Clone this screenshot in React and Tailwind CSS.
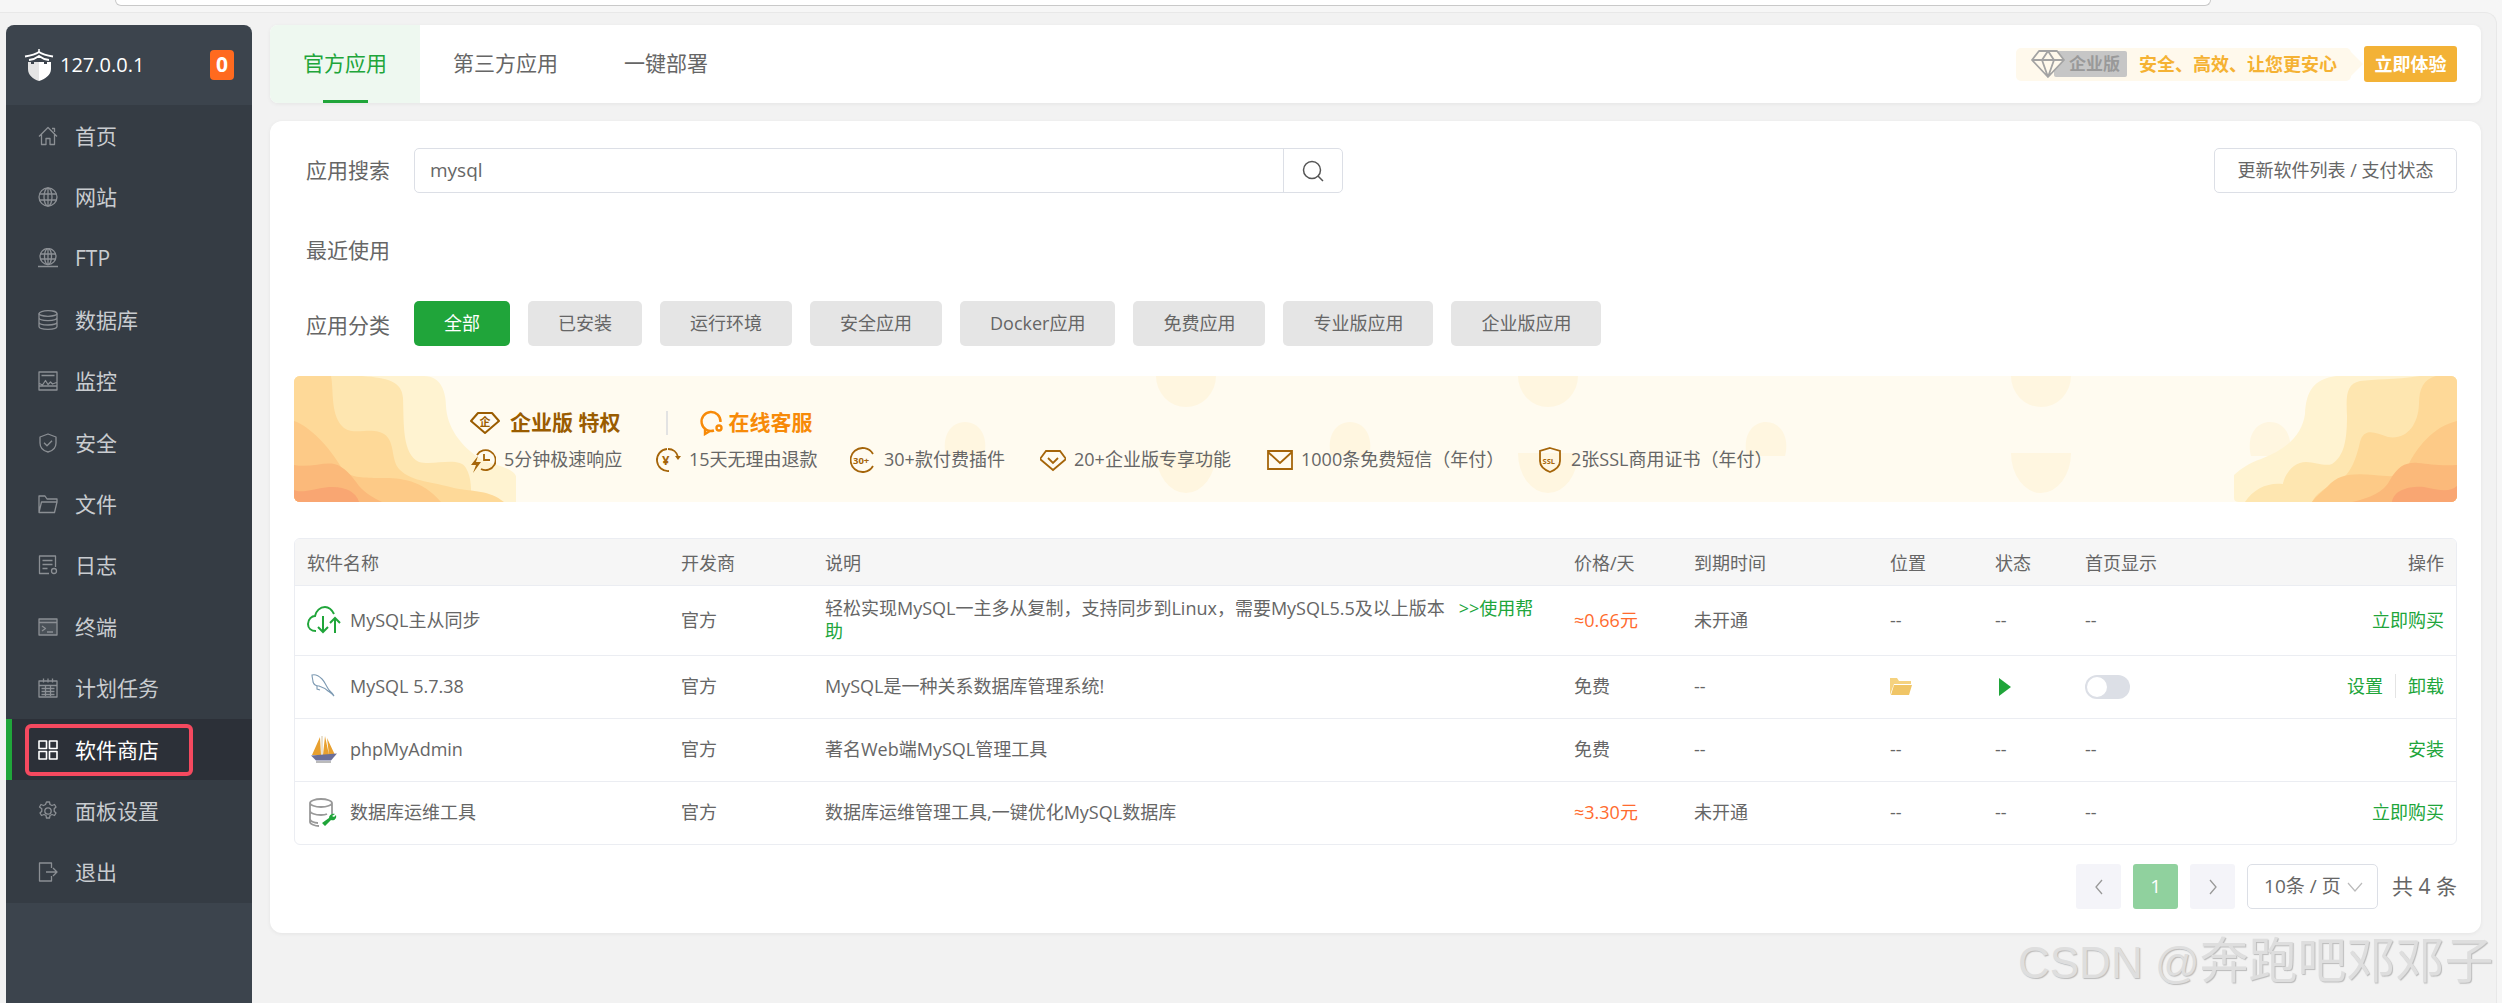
const FONT = "font-['Open_Sans','Noto_Sans_CJK_SC',sans-serif]";

const Ico = ({ children, className = 'w-5 h-5' }) => (
  <svg viewBox="0 0 20 20" fill="none" stroke="currentColor" strokeWidth="1.3" strokeLinejoin="round" className={className}>
    {children}
  </svg>
);

const navItems = [
  { label: '首页', icon: <Ico><path d="M1 10.5 10 1.500l9 9M3.500 8.500V18.500h4.500v-6h4v6h4.500V8.500M14 2.500h2.500V6" /></Ico> },
  { label: '网站', icon: <Ico><circle cx="10" cy="10" r="9" /><ellipse cx="10" cy="10" rx="4" ry="9" /><path d="M10 1v18M1.500 7h17M1.500 13h17" /></Ico> },
  { label: 'FTP', icon: <Ico><circle cx="10" cy="8.500" r="8" /><ellipse cx="10" cy="8.500" rx="3.500" ry="8" /><path d="M10 .5v16M2 6h16M2 11h16M0 18.500h20" /></Ico> },
  { label: '数据库', icon: <Ico><ellipse cx="10" cy="3.500" rx="9" ry="2.800" /><path d="M1 3.500v13c0 1.600 4 2.800 9 2.800s9-1.200 9-2.800v-13M1 7.800c0 1.600 4 2.800 9 2.800s9-1.200 9-2.800M1 12.200c0 1.600 4 2.800 9 2.800s9-1.200 9-2.800" /></Ico> },
  { label: '监控', icon: <Ico><path d="M1 1h18v18H1zM1 15h18M3.500 4.500h13M1.500 12.500l3 1.500 3-4.500 2.500 4 2.500-2.500 2 2 4-1.500" /></Ico> },
  { label: '安全', icon: <Ico><path d="M10 1l8 3v6c0 5-4 8-8 9-4-1-8-4-8-9V4z" /><path d="M6 9.800l3 3 5-5" /></Ico> },
  { label: '文件', icon: <Ico><path d="M1 18.500V2h6l2 3h10v3M1 18.500h15.500L19 8H3.500z" /></Ico> },
  { label: '日志', icon: <Ico><path d="M11 18.500H1.500V1h16v11M4.500 5.500h10M4.500 9.500h10M4.500 13.500h5" /><circle cx="16" cy="16" r="2.500" /></Ico> },
  { label: '终端', icon: <Ico><path d="M1 2h18v16H1z" fill="currentColor" fillOpacity=".25" /><path d="M1 5.500h18M4 9l3.500 2.500L4 14M9 15h6" /></Ico> },
  { label: '计划任务', icon: <Ico><path d="M1 3h18v16H1zM1 7.500h18M5.500 .5v4M10 .5v4M14.500 .5v4M3.500 10.500h13M3.500 13.500h13M3.500 16.500h13M7.500 8v10M12.500 8v10" /></Ico> },
  { label: '软件商店', active: true, icon: <Ico><path d="M1 1h7.500v7.500H1zM11.500 1H19v7.500h-7.500zM1 11.500h7.500V19H1zM11.500 11.500H19V19h-7.500z" strokeWidth="1.600" /></Ico> },
  { label: '面板设置', icon: <Ico><circle cx="10" cy="10" r="3.200" /><path d="M8.500 1h3l.5 2.500 2 1 2.500-1 1.500 2.500-1.800 1.800v2.400l1.800 1.800-1.500 2.500-2.500-1-2 1-.5 2.500h-3l-.5-2.500-2-1-2.500 1-1.500-2.500 1.800-1.800V7.800L1.500 6 3 3.500l2.500 1 2-1z" /></Ico> },
  { label: '退出', icon: <Ico><path d="M13.500 6V1H1.500v18h12v-5M8 10h11M15 6l4 4-4 4" /></Ico> },
];

const categories = ['全部', '已安装', '运行环境', '安全应用', 'Docker应用', '免费应用', '专业版应用', '企业版应用'];

const Sidebar = () => (
  <aside className="w-[246px] shrink-0 bg-[#3c444d] rounded-t-lg overflow-hidden">
    <div className="h-[80px] flex items-center pl-[18px] pr-[18px]">
      <svg viewBox="0 0 30 32" className="w-[30px] h-[32px]">
        <path d="M15 0v3" stroke="#fff" strokeWidth="1.500" />
        <path d="M1 7.500C7 6.500 12 5 15 3c3 2 8 3.500 14 4.500" stroke="#fff" strokeWidth="1.800" fill="none" />
        <path d="M5 11c4-.5 7.500-2 10-4 2.500 2 6 3.500 10 4" stroke="#fff" strokeWidth="1.800" fill="none" />
        <path d="M4 13h3v2h3v-2h5v19C9 30 4 26 4 20z" fill="#e4e4e4" />
        <path d="M15 13h5v2h3v-2h4v7c0 6-6 10-12 12z" fill="#fff" />
      </svg>
      <span className="ml-[6px] text-[20px] text-white leading-none">127.0.0.1</span>
      <span className="ml-auto w-[24px] h-[30px] rounded-[4px] bg-[#ff6a1f] text-white text-[21px] font-bold flex items-center justify-center">0</span>
    </div>
    <nav className="bg-[#353c44]">
      {navItems.map((item) => (
        <div
          key={item.label}
          className={`h-[61.400px] flex items-center relative ${item.active ? 'bg-[#2c3038] text-white border-l-[6px] border-[#20a53a] pl-[26px]' : 'text-[#c9ccd0] pl-[32px]'}`}
        >
          <span className={item.active ? 'text-white' : 'text-[#8b8f94]'}>{item.icon}</span>
          <span className="ml-[17px] text-[21px] leading-none pt-[1px]">{item.label}</span>
          {item.active && <div className="absolute left-[13px] top-[5px] w-[168px] h-[52px] border-[4px] border-[#f5495f] rounded-[6px]" />}
        </div>
      ))}
    </nav>
  </aside>
);

const TopTabs = () => (
  <div className="h-[78px] bg-white rounded-lg shadow-[0_1px_4px_rgba(0,0,0,0.06)] flex items-stretch text-[21px] text-[#666]">
    <div className="w-[150px] bg-[#eef8f0] rounded-l-lg relative flex items-center justify-center text-[#20a53a]">
      官方应用
      <div className="absolute bottom-0 left-[53px] w-[45px] h-[3px] bg-[#20a53a]" />
    </div>
    <div className="ml-[33px] flex items-center">第三方应用</div>
    <div className="ml-[66px] flex items-center">一键部署</div>
    <div className="ml-auto flex items-center pr-[24px]">
      <div className="relative h-[33px] w-[335px] bg-[#fff9ec] rounded-[5px] flex items-center pl-[15px] mr-[13px]">
        <div className="absolute right-[-12px] top-[4px] w-0 h-0 border-y-[12px] border-y-transparent border-l-[12px] border-l-[#fff9ec]" />
        <div className="w-[73px] h-[26px] absolute left-[38px] top-[3px] bg-[#c6c6c6] rounded-[2px] flex items-center justify-end pr-[7px] text-[#999] text-[17px] font-bold">企业版</div>
        <svg viewBox="0 0 34 28" className="w-[34px] h-[28px] relative" fill="#fff9ec" stroke="#a3a3a3" strokeWidth="1.800" strokeLinejoin="round">
          <path d="M8 1h18l7 9-16 17L1 10zM1 10h32M11 10l6 17 6-17-6-9z" />
        </svg>
        <span className="absolute left-[123px] text-[18px] font-bold text-[#f5b233] whitespace-nowrap">安全、高效、让您更安心</span>
      </div>
      <button className="w-[93px] h-[36px] rounded-[3px] bg-[#f3b236] text-white text-[18px] font-semibold">立即体验</button>
    </div>
  </div>
);

const topOvals = [892, 1254, 1747];
const smallOvals = [671, 1056, 1472, 1976];

const BannerArt = () => (
  <svg viewBox="0 0 2163 126" className="absolute inset-0 w-full h-full">
    <g fill="#fff6e0">
      {topOvals.map((x) => <path key={`t${x}`} d={`M${x - 30} 0A30 31 0 0 0 ${x + 30} 0z`} />)}
      {topOvals.map((x) => <path key={`b${x}`} d={`M${x - 30} 77A30 40 0 0 0 ${x + 30} 77z`} />)}
      {smallOvals.map((x) => <path key={`s${x}`} d={`M${x - 19} 80C${x - 24} 60 ${x - 14} 46 ${x} 46C${x + 14} 46 ${x + 24} 60 ${x + 19} 80z`} />)}
    </g>
    {/* left */}
    <path d="M0 0H130C148 0 152 18 152 30C153 50 165 70 190 85C205 90 218 92 222 100V126H0z" fill="#fff3d1" />
    <path d="M0 0H68C95 2 108 6 109 22C110 48 108 78 125 86C140 90 165 80 172 92C178 102 177 115 177 126H0z" fill="#fee6b0" />
    <path d="M0 0H37C40 15 36 40 50 52C62 60 78 50 90 58C102 66 96 84 106 94C118 106 140 106 160 112C180 116 195 114 210 126H0z" fill="#fed998" />
    <path d="M0 45C15 50 35 70 47 91C55 102 65 101 80 102C100 102 125 100 147 126H0z" fill="#fdca87" />
    <path d="M0 89C15 92 30 86 40 88C50 90 58 100 65 110C72 118 80 122 88 126H0z" fill="#fbb97a" />
    <path d="M0 114C8 118 22 112 35 111C50 110 62 115 65 126H0z" fill="#f9a672" />
    {/* right */}
    <path d="M2163 0H2042C2020 3 2012 15 2011 38C2008 58 1995 72 1967 83C1955 87 1948 92 1940 99V122Q1940 126 1945 126H2163z" fill="#fff3d1" />
    <path d="M2163 0H2126C2100 4 2080 3 2066 5C2052 8 2052 20 2053 40C2053 65 2050 80 2038 88C2028 92 2012 80 2000 90C1990 98 1989 108 1989 108C1975 106 1960 112 1951 126H2163z" fill="#fee6b0" />
    <path d="M2163 0H2142C2130 3 2125 12 2125 28C2124 50 2112 64 2094 61C2080 56 2070 52 2066 66C2062 84 2056 100 2042 107C2030 112 2022 118 2018 126H2163z" fill="#fed998" />
    <path d="M2163 45C2140 50 2122 72 2114 90C2110 102 2098 101 2080 99C2060 97 2044 98 2034 110C2028 116 2022 120 2018 126H2163z" fill="#fdca87" />
    <path d="M2163 89C2145 90 2135 88 2124 87C2112 86 2104 90 2096 104C2090 116 2076 122 2058 126H2163z" fill="#fbb97a" />
    <path d="M2163 110C2155 117 2145 114 2130 111C2115 110 2100 114 2098 126H2163z" fill="#f9a672" />
  </svg>
);

const bi = 'w-[26px] h-[26px] shrink-0 text-[#a5650a]';
const perks = [
  { text: '5分钟极速响应', w: 'w-[185px]', icon: <svg viewBox="0 0 26 26" fill="none" stroke="currentColor" strokeWidth="1.800" className={bi}><path d="M7 8a10 10 0 1 1 4 14M14 7v6h6" /><path d="M8 9L1 18h5l-3 8 8-11H6z" fill="currentColor" stroke="none" /></svg> },
  { text: '15天无理由退款', w: 'w-[195px]', icon: <svg viewBox="0 0 26 26" fill="none" stroke="currentColor" strokeWidth="1.800" className={bi}><path d="M12 2a11 11 0 1 0 2 22M13 2c5 0 9 3 10 8" /><path d="M20 9h6l-3 4z" fill="currentColor" stroke="none" /><text x="7" y="18" fontSize="13" fontWeight="700" fill="currentColor" stroke="none">¥</text></svg> },
  { text: '30+款付费插件', w: 'w-[190px]', icon: <svg viewBox="0 0 26 26" fill="none" stroke="currentColor" strokeWidth="1.800" className={bi}><path d="M23 7a12 12 0 1 0 0 12" /><text x="3" y="16.500" fontSize="9.500" fontWeight="700" fill="currentColor" stroke="none">30+</text></svg> },
  { text: '20+企业版专享功能', w: 'w-[227px]', icon: <svg viewBox="0 0 26 26" fill="none" stroke="currentColor" strokeWidth="1.800" className={bi}><path d="M6 4h14l6 8-13 11L0 12zM8 11l5 5 5-5" /></svg> },
  { text: '1000条免费短信（年付）', w: 'w-[270px]', icon: <svg viewBox="0 0 26 26" fill="none" stroke="currentColor" strokeWidth="1.800" className={bi}><path d="M1 4h24v18H1zM1 5l12 11L25 5" /></svg> },
  { text: '2张SSL商用证书（年付）', w: '', icon: <svg viewBox="0 0 26 26" fill="none" stroke="currentColor" strokeWidth="1.800" className={bi}><path d="M13 1l10 3v10c0 6-5 9-10 11C8 23 3 20 3 14V4z" /><text x="5.500" y="16.500" fontSize="7.500" fontWeight="700" fill="currentColor" stroke="none">SSL</text></svg> },
];

const Banner = () => (
  <div className="relative h-[126px] mt-[30px] bg-[#fffbf0] rounded-md overflow-hidden">
    <BannerArt />
    <div className="relative pl-[176px] pt-[32px]">
      <div className="flex items-center h-[30px]">
        <svg viewBox="0 0 30 24" className="w-[30px] h-[24px]" fill="none" stroke="#9a5c00" strokeWidth="2" strokeLinejoin="round">
          <path d="M8 2h14l7 8-14 12L1 10z" />
          <text x="9.500" y="15" fontSize="11" fontWeight="700" fill="#9a5c00" stroke="none">企</text>
        </svg>
        <span className="ml-[10px] text-[21px] font-bold text-[#9a5c00] whitespace-nowrap">企业版 特权</span>
        <div className="ml-[46px] w-[2px] h-[24px] bg-[#e3e3e3]" />
        <svg viewBox="0 0 24 26" className="ml-[31px] w-[24px] h-[26px]" fill="none" stroke="#f78a08" strokeWidth="2.400">
          <path d="M15 20.500A9.500 9.500 0 1 1 21.500 12" />
          <path d="M6 18v6l5-3" />
          <circle cx="20" cy="18" r="2.500" />
        </svg>
        <span className="ml-[5px] text-[21px] font-bold text-[#f78a08] whitespace-nowrap">在线客服</span>
      </div>
      <div className="flex items-center mt-[8px] text-[18px] text-[#666] whitespace-nowrap">
        {perks.map((p) => (
          <div key={p.text} className={`flex items-center gap-[8px] ${p.w}`}>
            {p.icon}
            <span>{p.text}</span>
          </div>
        ))}
      </div>
    </div>
  </div>
);

const CloudIcon = () => (
  <svg viewBox="0 0 34 28" fill="none" stroke="#20a53a" strokeWidth="2" className="w-[34px] h-[28px]">
    <path d="M9 25C4 25 1 22 1 18C1 13 5 10 8 10C9 5 13 1 18 1C22 1 25 4 27 8" />
    <path d="M16 10v16M11 21l5 5 5-5M28 27V12M23 17l5-5 5 5" />
  </svg>
);

const DolphinIcon = () => (
  <svg viewBox="0 0 34 28" fill="none" stroke="#7d9ab3" strokeWidth="1.100" className="w-[34px] h-[28px]">
    <path d="M5 2C8 1 12 3 15 6C18 9 19 13 22 17C24 19 26 21 27 23C25 21 23 19 21 18C18 15 15 14 12 13C9 13 7 12 6 9C6 7 5 4 5 2z" />
    <path d="M10 13l0 3 3 1" />
  </svg>
);

const SailIcon = () => (
  <svg viewBox="0 0 34 28" className="w-[34px] h-[28px]">
    <path d="M13 1L5 19h9zM18 0L16 19h6zM20 2l8 17h-6z" fill="#e8a02f" />
    <path d="M15 0v19" stroke="#c9b58a" strokeWidth=".8" />
    <path d="M4 19.500l26-2-6 7H9z" fill="#6b6f98" />
    <path d="M9 26h15" stroke="#bbb" strokeWidth="2" />
  </svg>
);

const DbToolIcon = () => (
  <svg viewBox="0 0 34 30" className="w-[34px] h-[30px]" fill="none">
    <path d="M3 24V5c0-2 5-4 11-4s11 2 11 4v11M3 5c0 2 5 4 11 4s11-2 11-4M3 13c0 2 5 4 11 4 2 0 4 0 6-1M3 21c0 2 4 4 8 4M3 24c0 2 5 4 9 4" stroke="#999" strokeWidth="1.800" />
    <path d="M28 16c-3-1-6 1-6 4l-7 5 3 3 6-6c3 1 6-1 5-5l-2 2-2-1z" fill="#20a53a" />
  </svg>
);

const rows = [
  { icon: <CloudIcon />, name: 'MySQL主从同步', desc: '轻松实现MySQL一主多从复制，支持同步到Linux，需要MySQL5.5及以上版本', help: '>>使用帮助', price: '≈0.66元', paid: true, expire: '未开通', action: ['立即购买'], h: 'h-[70px]' },
  { icon: <DolphinIcon />, name: 'MySQL 5.7.38', desc: 'MySQL是一种关系数据库管理系统!', price: '免费', expire: '--', action: ['设置', '卸载'], installed: true, h: 'h-[63px]' },
  { icon: <SailIcon />, name: 'phpMyAdmin', desc: '著名Web端MySQL管理工具', price: '免费', expire: '--', action: ['安装'], h: 'h-[63px]' },
  { icon: <DbToolIcon />, name: '数据库运维工具', desc: '数据库运维管理工具,一键优化MySQL数据库', price: '≈3.30元', paid: true, expire: '未开通', action: ['立即购买'], h: 'h-[63px]' },
];

const headers = ['软件名称', '开发商', '说明', '价格/天', '到期时间', '位置', '状态', '首页显示'];

const SoftTable = () => (
  <div className="mt-[36px] border border-[#ebedf2] rounded-md overflow-hidden text-[18px] text-[#666]">
    <table className="w-full table-fixed border-collapse">
      <colgroup>
        <col className="w-[374px]" />
        <col className="w-[144px]" />
        <col className="w-[749px]" />
        <col className="w-[120px]" />
        <col className="w-[196px]" />
        <col className="w-[105px]" />
        <col className="w-[90px]" />
        <col className="w-[170px]" />
        <col />
      </colgroup>
      <thead>
        <tr className="h-[46px] bg-[#f6f6f6] border-b border-[#ebedf2]">
          {headers.map((h) => (
            <th key={h} className="font-normal text-left px-[12px] pt-[3px]">{h}</th>
          ))}
          <th className="font-normal text-right px-[12px] pt-[3px]">操作</th>
        </tr>
      </thead>
      <tbody>
        {rows.map((r) => (
          <tr key={r.name} className={`${r.h} border-b border-[#ebedf2] last:border-b-0`}>
            <td className="px-[12px]">
              <div className="flex items-center gap-[9px]">
                <span className="w-[34px] flex justify-center">{r.icon}</span>
                <span>{r.name}</span>
              </div>
            </td>
            <td className="px-[12px]">官方</td>
            <td className="pl-[12px] pr-[24px] leading-[23px]">
              {r.desc}
              {r.help && <span className="text-[#20a53a] ml-[14px]">{r.help}</span>}
            </td>
            <td className={`px-[12px] ${r.paid ? 'text-[#ff6b2e]' : ''}`}>{r.price}</td>
            <td className="px-[12px]">{r.expire}</td>
            <td className="px-[12px]">
              {r.installed ? (
                <svg viewBox="0 0 22 17" className="w-[22px] h-[17px]">
                  <path d="M0 0h7l2 3h12v3H4L0 17z" fill="#f5d27f" />
                  <path d="M4 7h18l-3 10H1z" fill="#f0c566" />
                </svg>
              ) : '--'}
            </td>
            <td className="px-[12px]">
              {r.installed ? <div className="ml-[4px] w-0 h-0 border-y-[9px] border-y-transparent border-l-[12px] border-l-[#20a53a]" /> : '--'}
            </td>
            <td className="px-[12px]">
              {r.installed ? (
                <div className="w-[45px] h-[24px] rounded-full bg-[#dcdfe6] p-[2px]">
                  <div className="w-[20px] h-[20px] rounded-full bg-white" />
                </div>
              ) : '--'}
            </td>
            <td className="px-[12px] text-right text-[#20a53a] whitespace-nowrap">
              {r.action.map((a, i) => (
                <span key={a} className={i > 0 ? 'ml-[12px] pl-[12px] border-l border-[#e4e4e4]' : ''}>{a}</span>
              ))}
            </td>
          </tr>
        ))}
      </tbody>
    </table>
  </div>
);

const Pager = () => (
  <div className="mt-[19px] flex justify-end items-center text-[#666]">
    <div className="w-[45px] h-[45px] rounded-[3px] bg-[#f4f4f9] flex items-center justify-center">
      <svg viewBox="0 0 10 18" className="w-[10px] h-[18px]" fill="none" stroke="#999" strokeWidth="1.300"><path d="M8 2L2 9l6 7" /></svg>
    </div>
    <div className="ml-[12px] w-[45px] h-[45px] rounded-[3px] bg-[#90d19e] text-white text-[19px] flex items-center justify-center">1</div>
    <div className="ml-[12px] w-[45px] h-[45px] rounded-[3px] bg-[#f4f4f9] flex items-center justify-center">
      <svg viewBox="0 0 10 18" className="w-[10px] h-[18px]" fill="none" stroke="#999" strokeWidth="1.300"><path d="M2 2l6 7-6 7" /></svg>
    </div>
    <div className="ml-[12px] w-[131px] h-[45px] border border-[#dcdfe6] rounded-[5px] flex items-center pl-[16px] text-[19px] whitespace-nowrap">
      10条 / 页
      <svg viewBox="0 0 16 10" className="ml-auto mr-[14px] w-[16px] h-[10px]" fill="none" stroke="#bbb" strokeWidth="1.200"><path d="M1 1l7 8 7-8" /></svg>
    </div>
    <span className="ml-[14px] text-[21px] whitespace-nowrap">共 4 条</span>
  </div>
);

const MainCard = () => (
  <div className="mt-[18px] bg-white rounded-xl shadow-[0_1px_4px_rgba(0,0,0,0.06)] px-[24px] pt-[27px] pb-[24px] text-[#666]">
    <div className="flex items-center h-[45px]">
      <span className="ml-[12px] w-[108px] text-[21px]">应用搜索</span>
      <div className="w-[929px] h-[45px] border border-[#dcdfe6] rounded-[5px] flex items-center">
        <span className="pl-[15px] text-[19px] flex-1">mysql</span>
        <div className="w-[59px] h-full border-l border-[#dcdfe6] flex items-center justify-center">
          <svg viewBox="0 0 24 24" className="w-[24px] h-[24px]" fill="none" stroke="#555" strokeWidth="1.500"><circle cx="11" cy="11" r="8.500" /><path d="M17 17l5 5" /></svg>
        </div>
      </div>
      <button className="ml-auto w-[243px] h-[45px] border border-[#dcdfe6] rounded-[5px] text-[18px] bg-white">更新软件列表 / 支付状态</button>
    </div>
    <div className="flex items-center h-[45px] mt-[35px]">
      <span className="ml-[12px] text-[21px]">最近使用</span>
    </div>
    <div className="flex items-center mt-[28px]">
      <span className="ml-[12px] w-[108px] text-[21px] translate-y-[2px]">应用分类</span>
      <div className="flex gap-[18px]">
        {categories.map((c, i) => (
          <button key={c} className={`h-[45px] px-[30px] rounded-[5px] text-[18px] ${i === 0 ? 'bg-[#20a53a] text-white' : 'bg-[#e5e5e5] text-[#666]'}`}>{c}</button>
        ))}
      </div>
    </div>
    <Banner />
    <SoftTable />
    <Pager />
  </div>
);

export default function App() {
  return (
    <div className={`relative h-[1003px] w-[2502px] overflow-hidden bg-[#f6f6f6] ${FONT}`}>
      <div className="h-[12px]">
        <div className="ml-[115px] w-[2096px] h-[6px] bg-white border-x border-b border-[#c9c9c9] rounded-b-2xl" />
      </div>
      <div className="h-[991px] mr-[5px] bg-[#f2f2f2] border-t border-r border-[#e8e8e8] rounded-tr-xl pt-[12px] pl-[6px] flex gap-[18px]">
        <Sidebar />
        <main className="w-[2211px]">
          <TopTabs />
          <MainCard />
        </main>
      </div>
      <div className="absolute left-[2018px] top-[936px] text-[44px] leading-[50px] text-[#dedede] whitespace-nowrap [text-shadow:1px_1px_1px_#bbb] font-['Liberation_Sans','Noto_Sans_CJK_SC',sans-serif]">
        CSDN @<span className="text-[49px]">奔跑吧邓邓子</span>
      </div>
    </div>
  );
}
